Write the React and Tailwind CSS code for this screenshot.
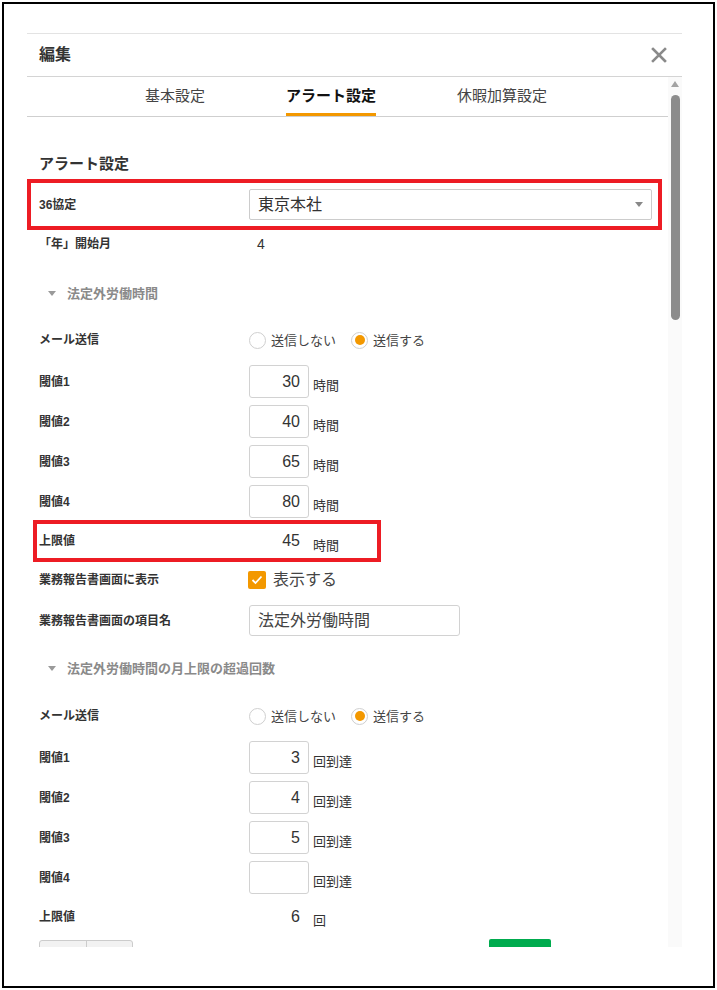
import React from "react";

const FONT = { fontFamily: '"Liberation Sans", "Noto Sans CJK JP", sans-serif' };

function Label({ children, w = "w-[210px]" }) {
  return <div className={`${w} shrink-0 text-[12px] font-bold text-[#333] leading-none`}>{children}</div>;
}

function SectionHead({ children, className = "" }) {
  return (
    <div className={`flex h-[30px] items-center pl-[21px] ${className}`}>
      <svg width="8" height="5" viewBox="0 0 8 5" className="mr-[11px]">
        <path d="M0 0h8L4 5z" fill="#9a9a9a" />
      </svg>
      <span className="text-[13px] font-bold text-[#8a8a8a] leading-none">{children}</span>
    </div>
  );
}

function Radio({ checked, children }) {
  return (
    <div className="flex items-center">
      <span className="flex h-[17px] w-[17px] items-center justify-center rounded-full border border-[#cfcfcf] bg-white">
        {checked && <span className="h-[10px] w-[10px] rounded-full bg-[#f39800]" />}
      </span>
      <span className="ml-[5px] text-[13px] text-[#444] leading-none">{children}</span>
    </div>
  );
}

function MailRow({ className = "" }) {
  return (
    <div className={`flex h-[30px] items-center pl-[12px] ${className}`}>
      <Label>メール送信</Label>
      <div className="flex items-center gap-[15px]">
        <Radio>送信しない</Radio>
        <Radio checked>送信する</Radio>
      </div>
    </div>
  );
}

function NumBox({ value, bordered = true }) {
  return (
    <div
      className={`flex h-[33px] w-[60px] shrink-0 items-center justify-end rounded-[3px] border pr-[8px] text-[16px] text-[#333] leading-none ${
        bordered ? "border-[#d2d2d2]" : "border-transparent"
      }`}
    >
      {value}
    </div>
  );
}

function Unit({ children }) {
  return <span className="mb-[5px] ml-[4px] text-[13px] text-[#333] leading-[14px]">{children}</span>;
}

function ThresholdRow({ label, value, unit, className = "" }) {
  return (
    <div className={`flex h-[33px] items-center pl-[12px] ${className}`}>
      <Label>{label}</Label>
      <div className="flex h-full items-end">
        <NumBox value={value} />
        <Unit>{unit}</Unit>
      </div>
    </div>
  );
}

export default function App() {
  return (
    <div className="h-[990px] w-[717px] bg-white p-[2px]" style={FONT}>
      <div className="h-full border-2 border-black pl-[23px] pt-[29px]">
        <div className="w-[655px] border-t border-[#e3e3e3]">
          {/* header */}
          <div className="flex h-[43px] items-center justify-between border-b border-[#d4d4d4] pl-[12px] pr-[15px]">
            <span className="text-[16px] font-bold text-[#333] leading-none">編集</span>
            <svg width="16" height="16" viewBox="0 0 16 16">
              <path d="M2 2L14 14M14 2L2 14" stroke="#8a8a8a" strokeWidth="2.6" strokeLinecap="square" />
            </svg>
          </div>

          <div className="flex h-[870px] overflow-hidden">
            <div className="w-[641px] shrink-0 overflow-hidden">
              {/* tabs */}
              <div className="flex h-[40px] gap-[81px] border-b border-[#cfcfcf] pl-[118px]">
                <div className="flex items-center text-[15px] text-[#444]">基本設定</div>
                <div className="flex items-center border-b-[3px] border-[#f39800] pt-[3px] text-[15px] font-bold text-[#111]">
                  アラート設定
                </div>
                <div className="flex items-center text-[15px] text-[#444]">休暇加算設定</div>
              </div>

              <div className="ml-[12px] mt-[37px] flex h-[20px] items-center text-[15px] font-bold text-[#333]">
                アラート設定
              </div>

              <div className="mt-[5px] flex h-[51px] w-[635px] items-center border-4 border-[#ed1c24] pl-[8px]">
                <Label>36協定</Label>
                <div className="flex h-[31px] w-[403px] items-center justify-between rounded-[2px] border border-[#cccccc] pl-[8px] pr-[8px]">
                  <span className="text-[16px] text-[#333] leading-none">東京本社</span>
                  <svg width="8" height="5" viewBox="0 0 8 5">
                    <path d="M0 0h8L4 5z" fill="#888" />
                  </svg>
                </div>
              </div>

              <div className="flex h-[28px] items-center pl-[12px]">
                <Label>「年」開始月</Label>
                <span className="pl-[8px] text-[14px] text-[#333] leading-none">4</span>
              </div>

              <SectionHead className="mt-[20px]">法定外労働時間</SectionHead>
              <MailRow className="mt-[17px]" />
              <ThresholdRow className="mt-[10px]" label="閾値1" value="30" unit="時間" />
              <ThresholdRow className="mt-[7px]" label="閾値2" value="40" unit="時間" />
              <ThresholdRow className="mt-[7px]" label="閾値3" value="65" unit="時間" />
              <ThresholdRow className="mt-[7px]" label="閾値4" value="80" unit="時間" />

              <div className="ml-[6px] mt-[2px] flex h-[42px] w-[348px] items-center border-4 border-[#ed1c24] pl-[2px]">
                <Label>上限値</Label>
                <div className="flex h-[33px] items-end">
                  <NumBox value="45" bordered={false} />
                  <Unit>時間</Unit>
                </div>
              </div>

              <div className="mt-[4px] flex h-[28px] items-center pl-[12px]">
                <Label w="w-[209px]">業務報告書画面に表示</Label>
                <span className="flex h-[18px] w-[18px] items-center justify-center rounded-[2px] bg-[#f39800]">
                  <svg width="12" height="10" viewBox="0 0 12 10">
                    <path d="M1.5 5l3 3 6-6.5" fill="none" stroke="#fff" strokeWidth="1.8" />
                  </svg>
                </span>
                <span className="ml-[7px] text-[16px] text-[#444] leading-none">表示する</span>
              </div>

              <div className="mt-[11px] flex h-[31px] items-center pl-[12px]">
                <Label>業務報告書画面の項目名</Label>
                <div className="flex h-[31px] w-[211px] items-center rounded-[3px] border border-[#d2d2d2] pl-[8px] text-[16px] text-[#444] leading-none">
                  法定外労働時間
                </div>
              </div>

              <SectionHead className="mt-[17px]">法定外労働時間の月上限の超過回数</SectionHead>
              <MailRow className="mt-[18px]" />
              <ThresholdRow className="mt-[10px]" label="閾値1" value="3" unit="回到達" />
              <ThresholdRow className="mt-[7px]" label="閾値2" value="4" unit="回到達" />
              <ThresholdRow className="mt-[7px]" label="閾値3" value="5" unit="回到達" />
              <ThresholdRow className="mt-[7px]" label="閾値4" value="" unit="回到達" />

              <div className="mt-[7px] flex h-[32px] items-center pl-[12px]">
                <Label>上限値</Label>
                <div className="flex h-[32px] items-end">
                  <NumBox value="6" bordered={false} />
                  <Unit>回</Unit>
                </div>
              </div>

              <div className="mt-[6px] flex items-start pl-[12px]">
                <div className="mt-[1px] flex h-[30px] w-[94px] overflow-hidden rounded-[3px] border border-[#cccccc] bg-[#f2f2f2]">
                  <div className="w-[47px] border-r border-[#cccccc]" />
                  <div className="flex-1" />
                </div>
                <div className="ml-[356px] h-[30px] w-[62px] rounded-[2px] bg-[#00ab4e]" />
              </div>
            </div>

            {/* scrollbar */}
            <div className="flex w-[14px] flex-col items-center bg-[#fafafa]">
              <svg width="8" height="6" viewBox="0 0 8 6" className="mt-[4px]">
                <path d="M4 0L8 6H0z" fill="#a3a3a3" />
              </svg>
              <div className="mt-[8px] h-[225px] w-[9px] rounded-full bg-[#8c8c8c]" />
            </div>
          </div>
        </div>
      </div>
    </div>
  );
}
